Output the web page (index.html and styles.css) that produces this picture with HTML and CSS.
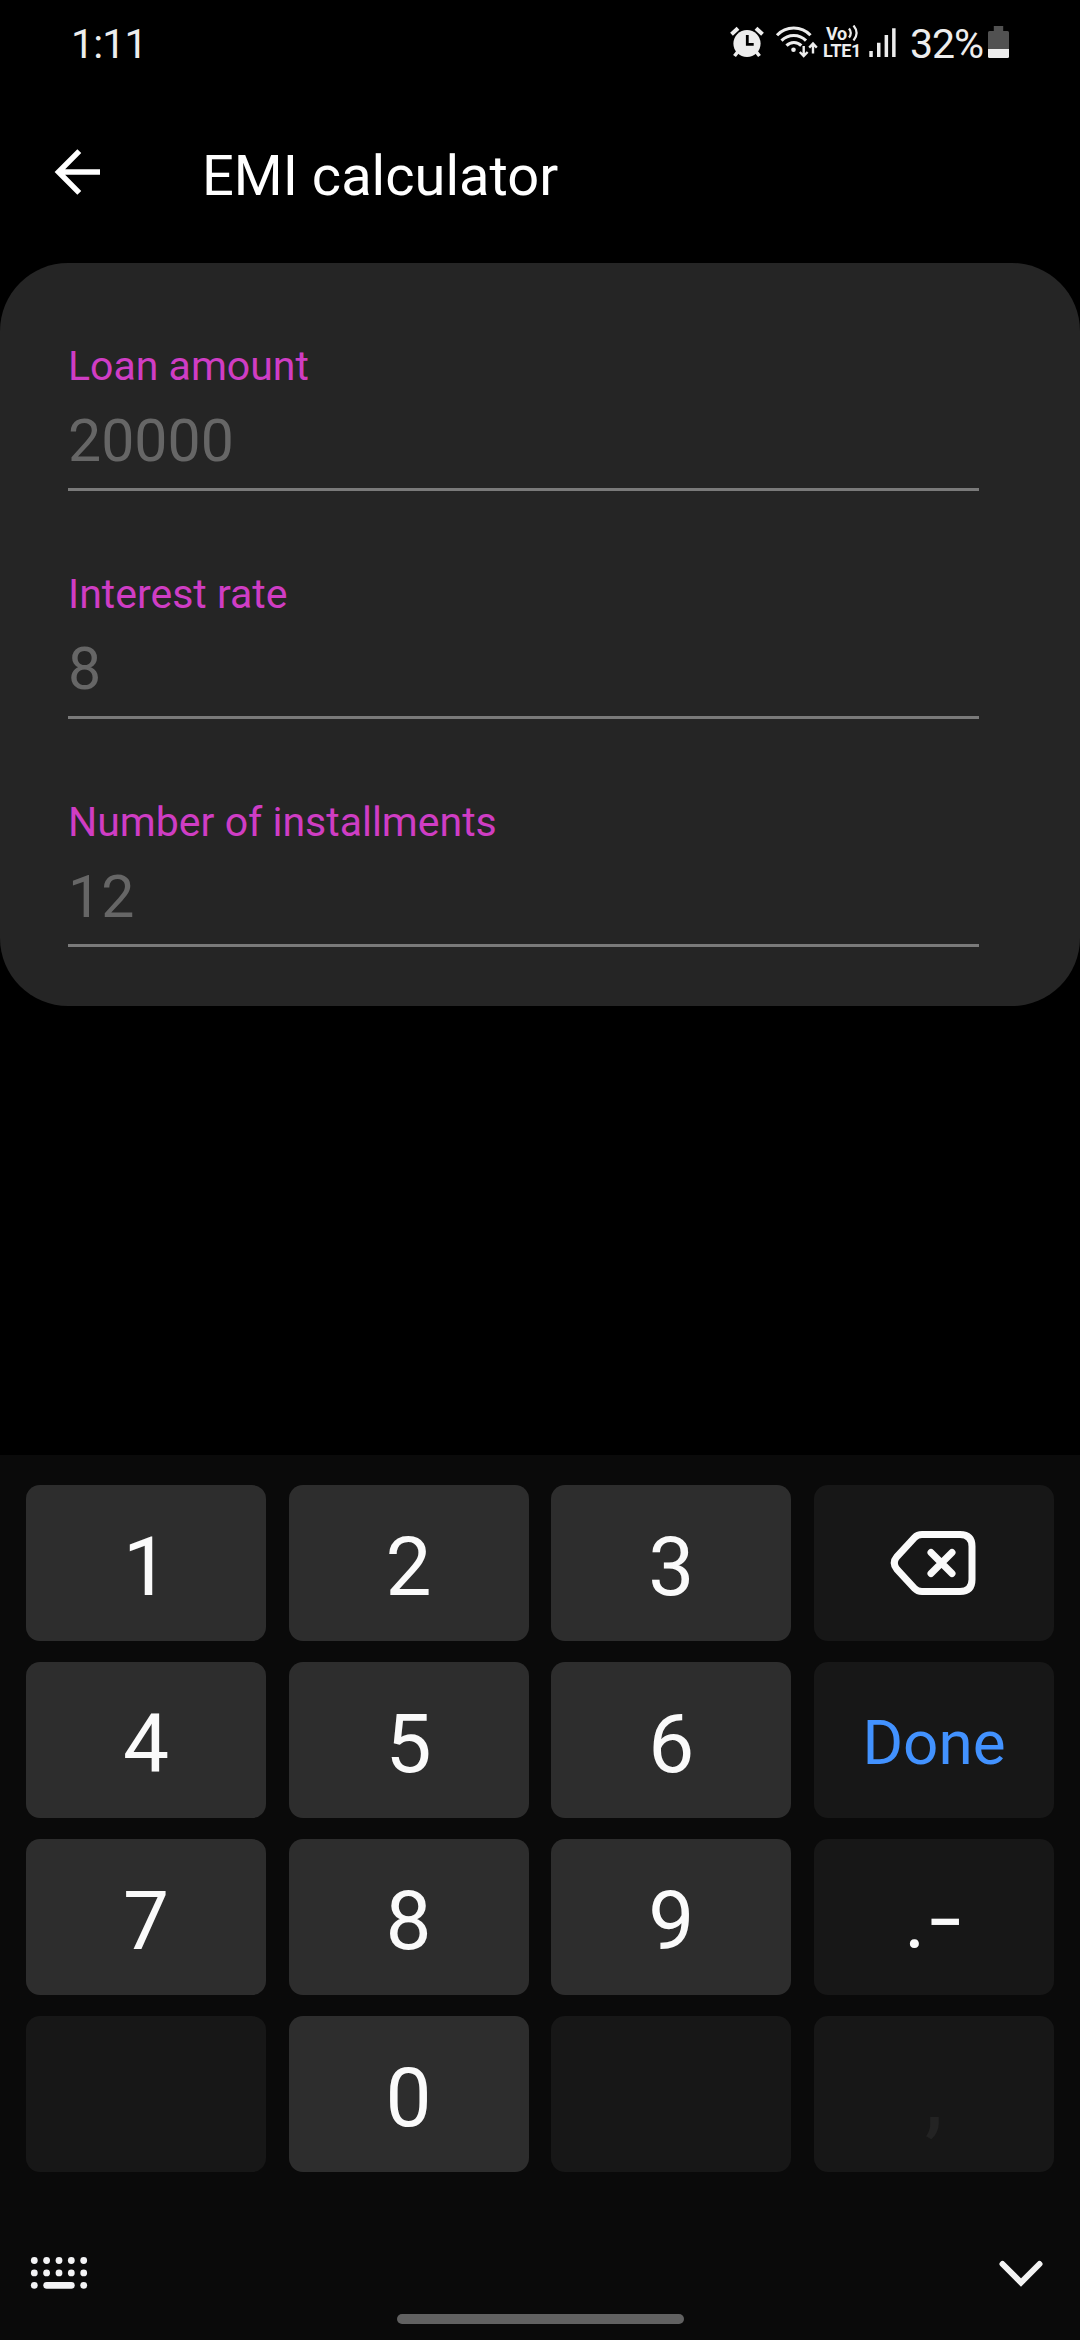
FILE: index.html
```html
<!DOCTYPE html>
<html lang="en">
<head>
<meta charset="utf-8">
<title>EMI calculator</title>
<link rel="stylesheet" href="styles.css">
</head>
<body>
<div class="screen">
  <header class="status">
    <span class="time">1:11</span>
    <div class="status-right">
      <svg class="alarm" width="34" height="32" viewBox="0 0 34 32">
        <circle cx="17" cy="17.5" r="13.6" fill="#ededed"/>
        <path d="M1.500 8.300 8 2.200M32.500 8.300 26 2.200" stroke="#ededed" stroke-width="4"/>
        <path d="M8 25.500 4.500 30M26 25.500 29.500 30" stroke="#ededed" stroke-width="3.600"/>
        <path d="M17.300 9v9.400h6.400" fill="none" stroke="#000" stroke-width="2.800"/>
      </svg>
      <svg class="wifi" width="43" height="34" viewBox="0 0 43 34">
        <g fill="none" stroke="#ededed" stroke-width="3.100">
          <path d="M2 10.300a23 23 0 0 1 33.500 0"/>
          <path d="M6.500 15.600a17.200 17.200 0 0 1 24.500 0"/>
          <path d="M11.500 20.600a10.500 10.500 0 0 1 14.800 0"/>
        </g>
        <circle cx="18.500" cy="24.800" r="2.300" fill="#ededed"/>
        <path d="M28.700 21v9.800M24.800 27l3.900 4 3.900-4M38 28.500V18.800M34.200 22.600l3.800-4 3.800 4" fill="none" stroke="#ededed" stroke-width="2.400"/>
      </svg>
      <div class="volte">
        <span class="vo">Vo<svg width="11" height="16" viewBox="0 0 11 16"><path d="M1 3.500q3.600 4.500 0 9M5.500.500q6.200 7.500 0 15" fill="none" stroke="#ededed" stroke-width="2.200"/></svg></span>
        <span>LTE1</span>
      </div>
      <svg class="signal" width="27" height="30" viewBox="0 0 27 30">
        <path d="M.3 23h3.500v6H.3zM8 14.700h3.500V29H8zM15.600 7h3.500v22h-3.500zM23.100.300h3.500V29h-3.500z" fill="#ededed"/>
      </svg>
      <span class="percent">32%</span>
      <svg class="battery" width="21" height="32" viewBox="0 0 21 32">
        <path d="M5.800 0h9.400v5h4.300A1.500 1.500 0 0 1 21 6.500V23H0V6.500A1.500 1.500 0 0 1 1.500 5h4.300z" fill="#515151"/>
        <path d="M0 23h21v7.500a1.500 1.500 0 0 1-1.500 1.500h-18A1.500 1.500 0 0 1 0 30.500z" fill="#ededed"/>
      </svg>
    </div>
  </header>

  <nav class="appbar">
    <svg class="back" width="48" height="48" viewBox="0 0 48 48">
      <path d="M27.300 3.100 6.500 24l20.800 20.900M6.500 24H48" fill="none" stroke="#fff" stroke-width="5.500"/>
    </svg>
    <h1 class="title">EMI calculator</h1>
  </nav>

  <main class="card">
    <div class="field"><div class="label">Loan amount</div><div class="value">20000</div></div>
    <div class="field"><div class="label">Interest rate</div><div class="value">8</div></div>
    <div class="field"><div class="label">Number of installments</div><div class="value">12</div></div>
  </main>

  <section class="keyboard">
    <div class="keys">
      <div class="key">1</div><div class="key">2</div><div class="key">3</div>
      <div class="key side icon">
        <svg width="88" height="66" viewBox="0 0 88 66">
          <path d="M32 4.500h38q12 0 12 12v33q0 12-12 12H32q-4.500 0-7.500-3.100L7 39.500q-5.500-6.500 0-13L24.500 7.600q3-3.100 7.500-3.100z" fill="none" stroke="#fafafa" stroke-width="7"/>
          <path d="M41 22.500l21 21M62 22.500l-21 21" stroke="#fafafa" stroke-width="7" stroke-linecap="round"/>
        </svg>
      </div>
      <div class="key">4</div><div class="key">5</div><div class="key">6</div>
      <div class="key side done">Done</div>
      <div class="key">7</div><div class="key">8</div><div class="key">9</div>
      <div class="key side symbols">.<span class="dash">−</span></div>
      <div class="key side"></div><div class="key">0</div><div class="key side"></div>
      <div class="key side comma">,</div>
    </div>
    <div class="tools">
      <svg width="58" height="34" viewBox="0 0 58 34">
        <g fill="#f3f3f5">
          <circle cx="4.300" cy="4.500" r="3.400"/><circle cx="16.600" cy="4.500" r="3.400"/><circle cx="29" cy="4.500" r="3.400"/><circle cx="41.300" cy="4.500" r="3.400"/><circle cx="53.700" cy="4.500" r="3.400"/>
          <circle cx="4.300" cy="16.900" r="3.400"/><circle cx="16.600" cy="16.900" r="3.400"/><circle cx="29" cy="16.900" r="3.400"/><circle cx="41.300" cy="16.900" r="3.400"/><circle cx="53.700" cy="16.900" r="3.400"/>
          <circle cx="4.300" cy="29.300" r="3.400"/><rect x="13.300" y="25.900" width="31.400" height="6.800" rx="3.400"/><circle cx="53.700" cy="29.300" r="3.400"/>
        </g>
      </svg>
      <svg width="44" height="28" viewBox="0 0 44 28">
        <path d="M3.500 4 22 22.500 40.500 4" fill="none" stroke="#f3f3f3" stroke-width="6" stroke-linecap="round"/>
      </svg>
    </div>
    <div class="home"></div>
  </section>
</div>
</body>
</html>
```

FILE: styles.css
```css
* { box-sizing: border-box; }
body { margin: 0; background: #000; }
svg { display: block; flex: none; }

.screen {
  width: 1080px;
  height: 2340px;
  display: flex;
  flex-direction: column;
  background: #000;
  font-family: Roboto, sans-serif;
  color: #fff;
  overflow: hidden;
}

.status {
  height: 88px;
  padding: 0 71px 0 71px;
  display: flex;
  justify-content: space-between;
  align-items: flex-start;
  color: #ededed;
  font-size: 41px;
  line-height: 88px;
}
.time { letter-spacing: -0.8px; }
.status-right { display: flex; height: 88px; }
.alarm { margin-top: 26px; margin-right: 11.500px; }
.wifi { margin-top: 25px; margin-right: 5px; }
.volte {
  width: 39px;
  margin-top: 25px;
  margin-right: 7px;
  font-size: 18px;
  font-weight: 700;
  line-height: 17px;
  letter-spacing: -0.3px;
}
.volte span { display: block; white-space: nowrap; }
.volte .vo { display: flex; gap: 1px; padding-left: 3px; }
.signal { margin-top: 28px; margin-right: 14px; }
.percent { width: 72px; margin-right: 6px; letter-spacing: -1px; }
.battery { margin-top: 26px; }

.appbar {
  height: 175px;
  padding-left: 52px;
  display: flex;
  align-items: flex-start;
}
.back { margin-top: 60px; }
.title {
  margin: 0 0 0 102px;
  font-size: 56px;
  font-weight: 400;
  line-height: 176px;
}

.card {
  height: 743px;
  padding: 78px 101px 0 68px;
  border-radius: 68px;
  background: #252525;
}
.field {
  height: 150px;
  margin-bottom: 78px;
  border-bottom: 3px solid #7a7a7a;
}
.label { font-size: 41px; line-height: 50px; color: #cf3dc4; }
.value { font-size: 59px; line-height: 99px; color: #666; }

.keyboard {
  height: 885px;
  margin-top: auto;
  padding: 30px 26px 0;
  flex: none;
  display: flex;
  flex-direction: column;
  background: #0a0a0a;
}
.keys {
  display: grid;
  grid-template-columns: repeat(4, 240px);
  grid-auto-rows: 156px;
  justify-content: space-between;
  row-gap: 21px;
}
.key {
  border-radius: 14px;
  background: #2d2d2d;
  color: #fafafa;
  font-size: 82px;
  line-height: 164px;
  text-align: center;
}
.side { background: #171717; }
.icon { display: flex; align-items: center; justify-content: center; }
.done { font-size: 62px; line-height: 162px; color: #4292ff; }
.symbols { font-size: 80px; line-height: 164px; }
.dash { margin-left: 1px; font-size: 66px; font-weight: 500; line-height: 1; vertical-align: 3px; }
.comma { color: #232323; font-weight: 500; }

.tools {
  display: flex;
  justify-content: space-between;
  padding: 84px 11px 0 4px;
}
.tools svg:last-child { margin-top: 4px; }
.home {
  width: 287px;
  height: 10px;
  margin: 24px auto 0;
  border-radius: 5px;
  background: #616161;
}
```
